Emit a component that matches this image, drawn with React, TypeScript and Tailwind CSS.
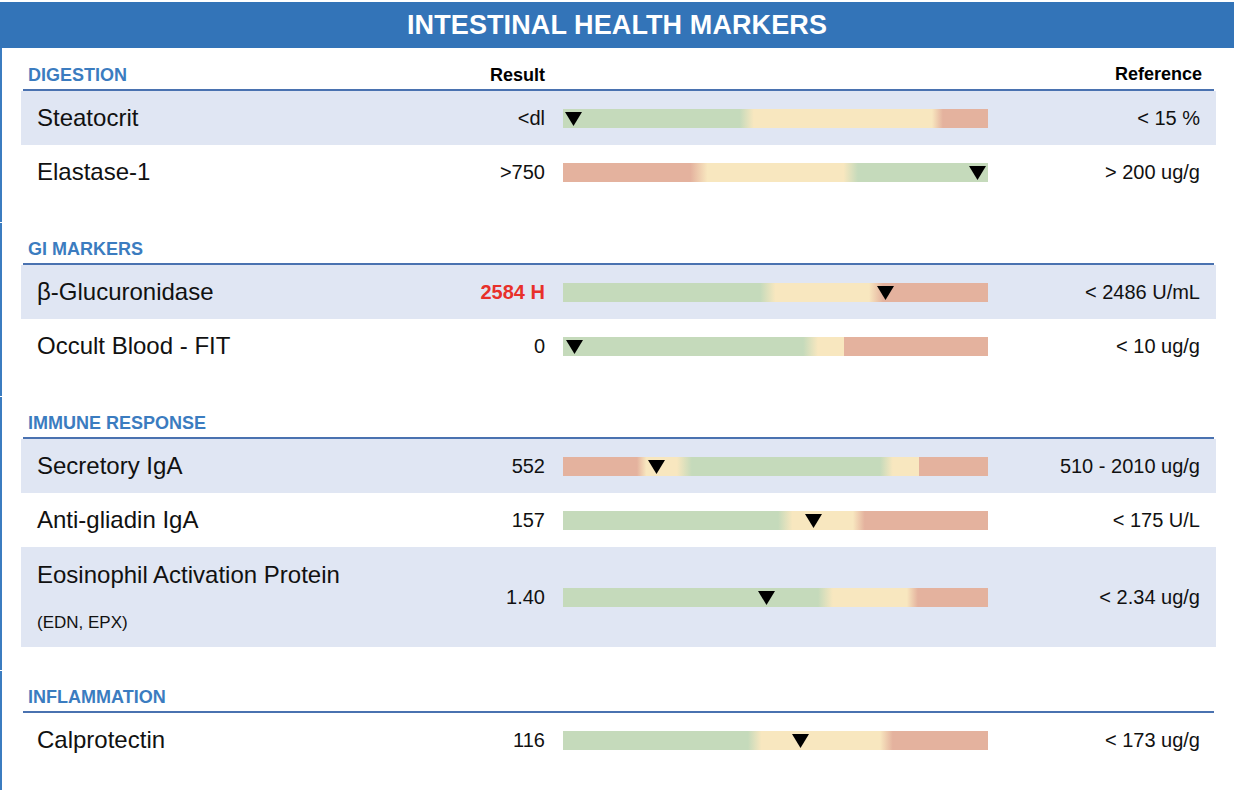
const G = "#c5dabb";
const Y = "#f8e7bf";
const R = "#e4b29e";

type Stop = [string, number];

type Marker = {
  name: string;
  sub?: string;
  result: string;
  high?: boolean;
  reference: string;
  marker: number;
  shaded?: boolean;
  stops: Stop[];
};

type Section = { title: string; rows: Marker[] };

const sections: Section[] = [
  {
    title: "DIGESTION",
    rows: [
      {
        name: "Steatocrit",
        result: "<dl",
        reference: "< 15 %",
        marker: 2.4,
        shaded: true,
        stops: [[G, 0], [G, 41.6], [Y, 44.9], [Y, 86.8], [R, 89.4], [R, 100]],
      },
      {
        name: "Elastase-1",
        result: ">750",
        reference: "> 200 ug/g",
        marker: 97.6,
        stops: [[R, 0], [R, 30], [Y, 34], [Y, 66], [G, 69.4], [G, 100]],
      },
    ],
  },
  {
    title: "GI MARKERS",
    rows: [
      {
        name: "β-Glucuronidase",
        result: "2584 H",
        high: true,
        reference: "< 2486 U/mL",
        marker: 75.9,
        shaded: true,
        stops: [[G, 0], [G, 46.4], [Y, 50], [Y, 72], [R, 75.3], [R, 100]],
      },
      {
        name: "Occult Blood - FIT",
        result: "0",
        reference: "< 10 ug/g",
        marker: 2.6,
        stops: [[G, 0], [G, 56.5], [Y, 60], [Y, 66.2], [R, 66.2], [R, 100]],
      },
    ],
  },
  {
    title: "IMMUNE RESPONSE",
    rows: [
      {
        name: "Secretory IgA",
        result: "552",
        reference: "510 - 2010 ug/g",
        marker: 21.9,
        shaded: true,
        stops: [
          [R, 0], [R, 17.4], [Y, 19.6], [Y, 26.8], [G, 30.3],
          [G, 74.6], [Y, 77.6], [Y, 83.8], [R, 83.8], [R, 100],
        ],
      },
      {
        name: "Anti-gliadin IgA",
        result: "157",
        reference: "< 175 U/L",
        marker: 59,
        stops: [[G, 0], [G, 50.6], [Y, 54], [Y, 68.2], [R, 71], [R, 100]],
      },
      {
        name: "Eosinophil Activation Protein",
        sub: "(EDN, EPX)",
        result: "1.40",
        reference: "< 2.34 ug/g",
        marker: 47.8,
        shaded: true,
        stops: [[G, 0], [G, 60], [Y, 63.5], [Y, 80.9], [R, 83.5], [R, 100]],
      },
    ],
  },
  {
    title: "INFLAMMATION",
    rows: [
      {
        name: "Calprotectin",
        result: "116",
        reference: "< 173 ug/g",
        marker: 55.8,
        stops: [[G, 0], [G, 43.5], [Y, 46.7], [Y, 74.6], [R, 77.6], [R, 100]],
      },
    ],
  },
];

function RangeBar({ stops, marker }: { stops: Stop[]; marker: number }) {
  const gradient = `linear-gradient(to right, ${stops
    .map(([c, p]) => `${c} ${p}%`)
    .join(", ")})`;

  return (
    <div className="relative h-[19px] w-[425px]" style={{ backgroundImage: gradient }}>
      <svg
        className="absolute top-[3px]"
        style={{ left: `calc(${marker}% - 8.5px)` }}
        width="17"
        height="14"
        viewBox="0 0 17 14"
      >
        <polygon points="0,0 17,0 8.5,14" fill="#000" />
      </svg>
    </div>
  );
}

function Row({ row }: { row: Marker }) {
  return (
    <div
      className={
        "flex items-center px-4 " +
        (row.sub ? "h-[100px] " : "h-[54px] ") +
        (row.shaded ? "bg-[#e0e6f3]" : "bg-white")
      }
    >
      <div className="flex w-[508px] items-center justify-between">
        {row.sub ? (
          <div className="flex flex-col">
            <span className="text-[24px] leading-[28px]">{row.name}</span>
            <span className="mt-6 text-[17px] leading-[20px]">{row.sub}</span>
          </div>
        ) : (
          <span className="text-[24px] leading-[28px]">{row.name}</span>
        )}
        <span
          className={
            row.high
              ? "text-[20px] font-bold text-[#e8302a]"
              : "text-[20px]"
          }
        >
          {row.result}
        </span>
      </div>
      <div className="ml-[18px]">
        <RangeBar stops={row.stops} marker={row.marker} />
      </div>
      <div className="flex-1 text-right text-[20px]">{row.reference}</div>
    </div>
  );
}

export default function App() {
  return (
    <div className="min-h-[806px] bg-white pt-[2px] font-['Liberation_Sans',Arial,sans-serif] text-[#111]">
      <div className="flex h-[46px] items-center justify-center bg-[#3374b8]">
        <h1 className="text-[27px] font-bold tracking-[0.1px] text-white">
          INTESTINAL HEALTH MARKERS
        </h1>
      </div>

      {sections.map((section) => (
        <section
          key={section.title}
          className="mb-px border-l-2 border-[#3b7cc0] pb-[23px] pl-[19px] pr-[18px] pt-4"
        >
          <div className="mx-[2px] flex items-end border-b-2 border-[#4a72b0] pb-1 leading-[20px]">
            <div className="flex w-[522px] justify-between pl-[5px]">
              <span className="text-[18px] font-bold text-[#3b7cc0]">{section.title}</span>
              {section.title === "DIGESTION" && (
                <span className="text-[18px] font-bold text-black">Result</span>
              )}
            </div>
            <div className="flex-1 pr-[12px] text-right">
              {section.title === "DIGESTION" && (
                <span className="text-[18px] font-bold text-black">Reference</span>
              )}
            </div>
          </div>
          {section.rows.map((row) => (
            <Row key={row.name} row={row} />
          ))}
        </section>
      ))}
    </div>
  );
}
